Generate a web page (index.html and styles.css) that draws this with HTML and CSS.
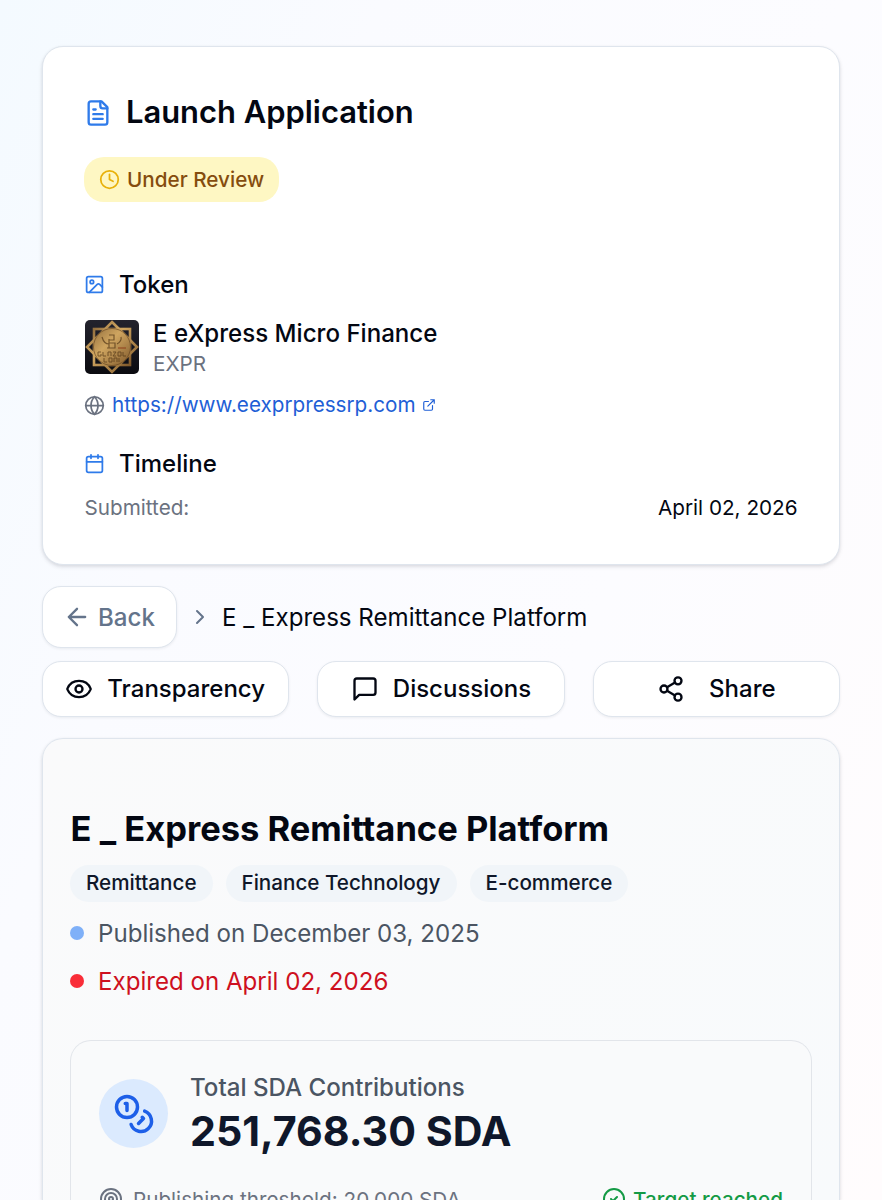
FILE: index.html
```html
<!DOCTYPE html>
<html lang="en">
<head>
<meta charset="utf-8">
<title>E _ Express Remittance Platform</title>
<link rel="stylesheet" href="styles.css">
</head>
<body>
<main class="page">
  <section class="card application">
    <h2 class="app-title">
      <svg class="icon i28 blue" viewBox="0 0 24 24"><path d="M15 2H6a2 2 0 0 0-2 2v16a2 2 0 0 0 2 2h12a2 2 0 0 0 2-2V7Z"/><path d="M14 2v4a2 2 0 0 0 2 2h4M10 9H8M16 13H8M16 17H8"/></svg>
      <span>Launch Application</span>
    </h2>
    <div class="status">
      <svg class="icon i21" viewBox="0 0 24 24"><circle cx="12" cy="12" r="10"/><path d="M12 6v6l4 2"/></svg>
      <span>Under Review</span>
    </div>
    <h3 class="sub token-title">
      <svg class="icon i21 blue" viewBox="0 0 24 24"><rect x="3" y="3" width="18" height="18" rx="2"/><circle cx="9" cy="9" r="2"/><path d="m21 15-3.086-3.086a2 2 0 0 0-2.828 0L6 21"/></svg>
      <span>Token</span>
    </h3>
    <div class="token">
      <svg class="token-logo" viewBox="0 0 54 54">
        <defs>
          <linearGradient id="gold" x1="0" y1="0" x2="1" y2="1"><stop offset="0" stop-color="#94703f"/><stop offset=".4" stop-color="#cfa560"/><stop offset="1" stop-color="#80592b"/></linearGradient>
          <linearGradient id="night" x1="0" y1="0" x2="0" y2="1"><stop offset="0" stop-color="#23232d"/><stop offset="1" stop-color="#0b0b10"/></linearGradient>
        </defs>
        <rect width="54" height="54" rx="5" fill="url(#night)"/>
        <g fill="none" stroke="url(#gold)" stroke-width="2.600">
          <rect x="9" y="9" width="36" height="36"/>
          <path d="M27 2 52 27 27 52 2 27Z"/>
        </g>
        <circle cx="27" cy="27" r="18.500" fill="url(#gold)" stroke="#5c3d1b" stroke-width=".6"/>
        <g fill="none" stroke="#523617" opacity=".7">
          <path stroke-width="1.200" d="M24 15h5v5h-5M24 19v9M24 23h6v5h-8M17 17q2 7 7 7M36 17q1 4-4 7"/>
          <path stroke-width="1" d="M16 32h-3v4h3v-2M18 32v4h3M23 36v-4h3v4M28 32h3l-3 4h3M33 36v-4h3v4zM38 32v4h3M19 38v4h3M24 38h3v4h-3zM29 42v-4h3v4M34 38v4"/>
        </g>
        <path d="M33 28h8" stroke="#8e3f1b" stroke-width="1"/>
      </svg>
      <div class="token-text">
        <div class="token-name"><span>E eXpress Micro Finance</span></div>
        <div class="token-code"><span>EXPR</span></div>
      </div>
    </div>
    <div class="site">
      <svg class="icon i21" viewBox="0 0 24 24"><circle cx="12" cy="12" r="10"/><path d="M12 2a14.500 14.500 0 0 0 0 20 14.500 14.500 0 0 0 0-20M2 12h20"/></svg>
      <a class="site-link"><span>https://www.eexprpressrp.com</span>
      <svg class="icon i14" viewBox="0 0 24 24"><path d="M15 3h6v6M10 14 21 3M18 13v6a2 2 0 0 1-2 2H5a2 2 0 0 1-2-2V8a2 2 0 0 1 2-2h6"/></svg></a>
    </div>
    <h3 class="sub timeline-title">
      <svg class="icon i21 blue" viewBox="0 0 24 24"><path d="M8 2v4M16 2v4M3 10h18"/><rect x="3" y="4" width="18" height="18" rx="2"/></svg>
      <span>Timeline</span>
    </h3>
    <div class="row">
      <span class="muted">Submitted:</span>
      <span>April 02, 2026</span>
    </div>
  </section>

  <nav class="crumbs">
    <a class="btn back"><svg class="icon i28" viewBox="0 0 24 24"><path d="m12 19-7-7 7-7M19 12H5"/></svg><span>Back</span></a>
    <svg class="icon i24 chevron" viewBox="0 0 24 24"><path d="m9 18 6-6-6-6"/></svg>
    <span>E _ Express Remittance Platform</span>
  </nav>

  <div class="actions">
    <a class="btn action transparency"><svg class="icon i28" viewBox="0 0 24 24"><path d="M2.062 12.348a1 1 0 0 1 0-.696 10.750 10.750 0 0 1 19.876 0 1 1 0 0 1 0 .696 10.750 10.750 0 0 1-19.876 0"/><circle cx="12" cy="12" r="3"/></svg><span>Transparency</span></a>
    <a class="btn action"><svg class="icon i28" viewBox="0 0 24 24"><path d="M21 15a2 2 0 0 1-2 2H7l-4 4V5a2 2 0 0 1 2-2h14a2 2 0 0 1 2 2z"/></svg><span>Discussions</span></a>
    <a class="btn action share"><svg class="icon i28" viewBox="0 0 24 24"><circle cx="18" cy="5" r="3"/><circle cx="6" cy="12" r="3"/><circle cx="18" cy="19" r="3"/><path d="m8.590 13.510 6.830 3.980M15.410 6.510l-6.820 3.980"/></svg><span>Share</span></a>
  </div>

  <section class="card project">
    <h1 class="project-title"><span>E _ Express Remittance Platform</span></h1>
    <div class="tags">
      <span class="tag">Remittance</span>
      <span class="tag">Finance Technology</span>
      <span class="tag">E-commerce</span>
    </div>
    <div class="fact"><i class="dot"></i><span>Published on December 03, 2025</span></div>
    <div class="fact expired"><i class="dot"></i><span>Expired on April 02, 2026</span></div>
    <div class="panel">
      <div class="total">
        <div class="coin">
          <svg class="icon i42" viewBox="0 0 24 24"><circle cx="8" cy="8" r="6"/><path d="M18.090 10.370A6 6 0 1 1 10.340 18M7 6h1v4M16.710 13.880l.7.710-2.820 2.820"/></svg>
        </div>
        <div>
          <div class="total-label"><span>Total SDA Contributions</span></div>
          <div class="total-value"><span>251,768.30 SDA</span></div>
        </div>
      </div>
      <div class="target">
        <span class="target-item"><svg class="icon i24" viewBox="0 0 24 24"><circle cx="12" cy="12" r="10"/><circle cx="12" cy="12" r="6"/><circle cx="12" cy="12" r="2"/></svg><span>Publishing threshold: 20,000 SDA</span></span>
        <span class="target-item reached"><svg class="icon i24" viewBox="0 0 24 24"><circle cx="12" cy="12" r="10"/><path d="m9 12 2 2 4-4"/></svg><span>Target reached</span></span>
      </div>
    </div>
  </section>
</main>
</body>
</html>
```
FILE: styles.css
```css
* { box-sizing: border-box; }
html, body { height: 1200px; overflow: hidden; }
body {
  margin: 0;
  font-family: Inter, "Liberation Sans", sans-serif;
  font-size: 24.100px;
  color: #030712;
  background: linear-gradient(112deg, #f4faff 0%, #fafbff 28%, #fcfcff 62%, #fffcfd 100%);
}
h1, h2, h3 { margin: 0; }
.page { padding: 46px 42px 0; }
.icon { flex: none; display: block; fill: none; stroke: currentColor; stroke-width: 2; stroke-linecap: round; stroke-linejoin: round; }
.i14 { width: 14px; height: 14px; }
.i21 { width: 21px; height: 21px; }
.i24 { width: 24px; height: 24px; }
.i28 { width: 28px; height: 28px; }
.i42 { width: 42px; height: 42px; }
.blue { color: #2f7bea; }
span { white-space: nowrap; }

.card { border: 1px solid #dfe5ed; border-radius: 21px; background: #fff; box-shadow: 0 2px 4px rgba(15, 23, 42, .1), 0 1px 3px rgba(15, 23, 42, .06); }
.application { height: 519px; padding: 44px 41.500px 0 41px; }
.app-title { display: flex; align-items: center; gap: 14px; height: 44px; font-size: 30.900px; font-weight: 600; }
.app-title span { padding-bottom: 3px; }
.status { display: flex; align-items: center; gap: 7px; width: 195px; height: 45px; margin-top: 22px; padding-left: 15px; border-radius: 20px; background: #fef7c3; color: #854d0e; font-size: 20.700px; font-weight: 500; }
.status .icon { color: #e8b10a; }
.sub { display: flex; align-items: center; gap: 14px; height: 34px; font-size: 24px; font-weight: 500; }
.token-title { margin-top: 65px; }
.token { display: flex; gap: 14px; margin-top: 19px; padding-left: 1px; }
.token-logo { width: 54px; height: 54px; display: block; }
.token-text { display: flex; flex-direction: column; }
.token-name { height: 28px; line-height: 28px; font-weight: 500; }
.token-code { height: 28px; line-height: 32px; font-size: 20.700px; color: #6b7280; }
.site { display: flex; align-items: center; gap: 7px; height: 28px; margin-top: 15px; font-size: 20.680px; color: #6b7280; }
.site-link { display: flex; align-items: center; gap: 6px; color: #1f5fd6; }
.site-link span { padding-bottom: 1px; }
.timeline-title { margin-top: 27px; }
.row { display: flex; align-items: center; justify-content: space-between; height: 28px; margin-top: 13px; font-size: 20.700px; }
.muted { color: #6b7280; padding-left: .5px; }

.btn { display: flex; align-items: center; border: 1px solid #dfe5ed; border-radius: 19px; background: #fff; font-weight: 500; box-shadow: 0 1px 3px rgba(15, 23, 42, .07); }
.crumbs { display: flex; align-items: center; margin-top: 21px; }
.crumbs span { padding-top: 1px; }
.back { width: 135px; height: 62px; padding-left: 20px; gap: 7px; color: #64748b; }
.chevron { margin: 0 10px 0 11px; color: #64748b; }
.actions { display: grid; grid-template-columns: repeat(3, 1fr); gap: 28px; margin-top: 13px; }
.action { height: 56px; justify-content: center; gap: 14px; font-size: 24px; }
.action span { padding-bottom: 1px; }
.transparency { padding-right: 1px; }
.share { gap: 24px; }

.project { height: 462px; margin-top: 21px; padding: 70px 27px 0 28px; border-bottom: 0; border-radius: 21px 21px 0 0; background: linear-gradient(135deg, #fafafb, #f8fafc); }
.project-title { height: 40px; line-height: 40px; margin-left: -.5px; font-size: 34.500px; font-weight: 700; }
.tags { display: flex; gap: 13px; margin-top: 16px; margin-left: -1px; }
.tag { height: 37px; line-height: 36px; padding: 0 16px; border-radius: 19px; background: #f1f5f9; font-size: 20.650px; font-weight: 500; color: #0f172a; }
.fact { display: flex; align-items: center; gap: 14px; height: 34px; margin-top: 14px; margin-left: -1px; color: #4b5563; }
.fact span { padding-top: 1px; }
.fact .dot { width: 14px; height: 14px; border-radius: 50%; background: #7fb0f8; }
.expired { color: #ce1020; }
.expired .dot { background: #f92d38; }
.panel { height: 161px; margin-top: 42px; margin-left: -1px; padding: 28px 28px 0; border: 1px solid #e2e5ea; border-bottom: 0; border-radius: 21px 21px 0 0; background: #f9fafb; }
.total { display: flex; align-items: center; gap: 22px; height: 89px; }
.coin { display: flex; align-items: center; justify-content: center; width: 69px; height: 69px; border-radius: 50%; background: #dbeafe; color: #1d5fe8; }
.total-label { height: 34px; line-height: 35px; color: #4b5563; font-weight: 500; }
.total-value { height: 54px; line-height: 54px; font-size: 41.200px; font-weight: 700; color: #0f172a; }
.target { display: flex; justify-content: space-between; margin-top: 27px; font-size: 20.700px; color: #6b7280; }
.target-item { display: flex; align-items: center; gap: 10px; height: 28px; }
.reached { gap: 7px; color: #149a45; font-weight: 500; }
```
